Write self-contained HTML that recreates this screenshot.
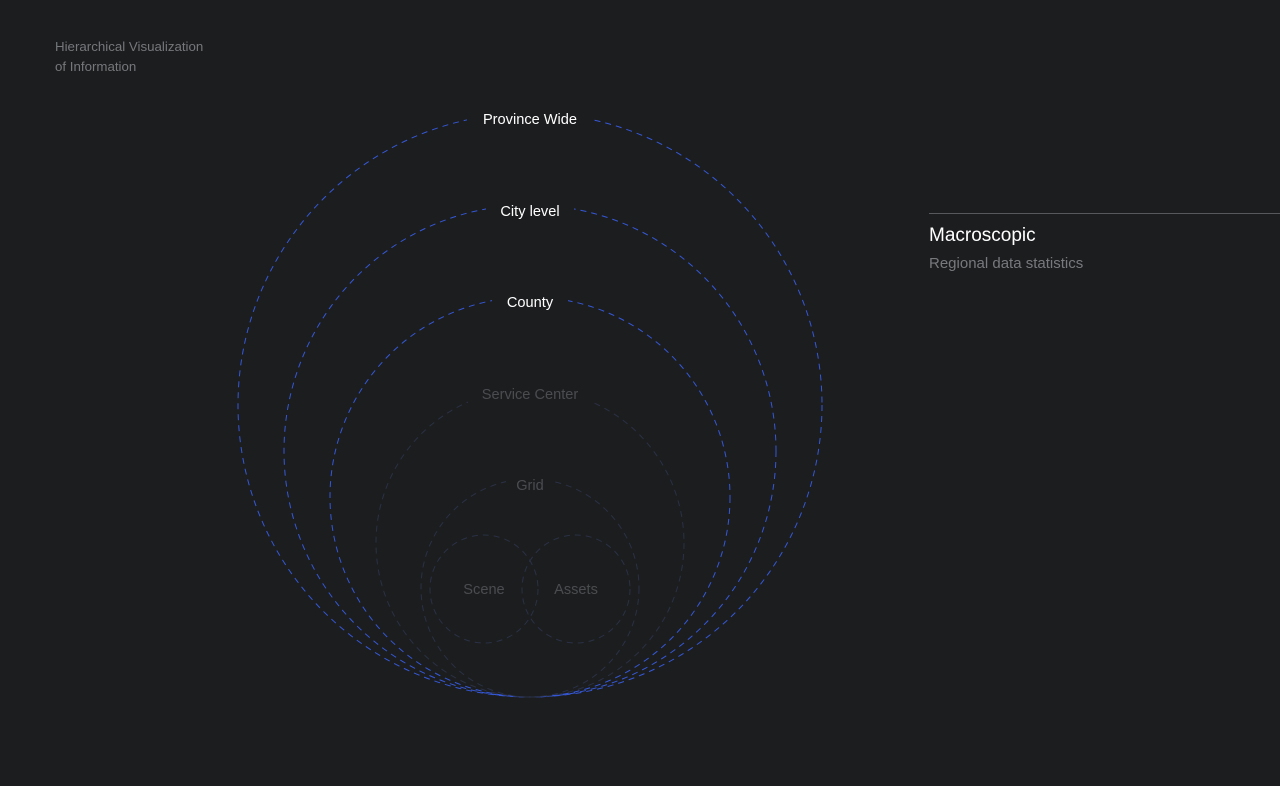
<!DOCTYPE html>
<html><head><meta charset="utf-8"><style>
html,body{margin:0;padding:0;background:#1c1d1f;width:1280px;height:786px;overflow:hidden;font-family:"Liberation Sans",sans-serif}
.t{position:absolute;left:55px;top:37px;color:#75777b;font-size:13.3px;line-height:20px}
.line{position:absolute;left:929px;top:213px;width:351px;height:1px;background:#56585c}
.h{position:absolute;left:929px;top:225px;color:#fff;font-size:19px;line-height:22px}
.s{position:absolute;left:929px;top:255px;color:#77797d;font-size:15px;line-height:18px}
</style></head><body>
<div class="t">Hierarchical Visualization<br>of Information</div>
<div class="line"></div>
<div class="h">Macroscopic</div>
<div class="s">Regional data statistics</div>
<svg width="1280" height="786" style="position:absolute;left:0;top:0" font-family="Liberation Sans, sans-serif" text-anchor="middle">
<g fill="none" stroke-dasharray="6 5" stroke-width="1">
<circle cx="530" cy="405" r="292" stroke="#3558d8"/>
<circle cx="530" cy="451" r="246" stroke="#3558d8"/>
<circle cx="530" cy="497" r="200" stroke="#3558d8"/>
<circle cx="530" cy="543" r="154" stroke="#2a3145"/>
<circle cx="530" cy="588" r="109" stroke="#2a3145"/>
<circle cx="484" cy="589" r="54" stroke="#2a3145"/>
<circle cx="576" cy="589" r="54" stroke="#2a3145"/>
</g>
<g fill="#1c1d1f">
<rect x="467" y="108" width="126" height="22"/>
<rect x="486" y="200" width="88" height="22"/>
<rect x="492" y="291" width="76" height="22"/>
<rect x="468" y="383" width="124" height="22"/>
<rect x="506" y="474" width="48" height="22"/>
</g>
<g font-size="14.6">
<text x="530" y="124" fill="#fff">Province Wide</text>
<text x="530" y="216" fill="#fff">City level</text>
<text x="530" y="307" fill="#fff">County</text>
<text x="530" y="399" fill="#4a4c50">Service Center</text>
<text x="530" y="490" fill="#4a4c50">Grid</text>
<text x="484" y="594" fill="#4a4c50">Scene</text>
<text x="576" y="594" fill="#4a4c50">Assets</text>
</g>
</svg>
</body></html>
